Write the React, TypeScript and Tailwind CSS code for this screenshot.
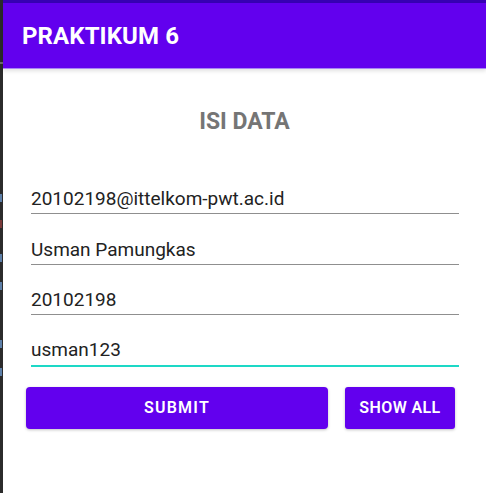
import React from "react";

const font = { fontFamily: "Roboto, 'Noto Sans', Arial, sans-serif" };

function Field({ value, last }: { value: string; last?: boolean }) {
  return (
    <div
      className={
        last
          ? "pb-[3px] border-b-2 border-[#1dd8c6]"
          : "pb-[2px] border-b border-[#8f8f8f]"
      }
    >
      <div className="h-[24px] leading-[24px] text-[19px] text-[#222222]">{value}</div>
    </div>
  );
}

export default function App() {
  return (
    <div className="flex w-[486px] h-[493px] overflow-hidden bg-white" style={font}>
      <div className="w-[3px] h-full bg-[#2b2b2b] flex flex-col">
        <div className="h-[62px]" />
        <div className="h-[2px] bg-[#6d6d6d]" />
        <div className="h-[130px]" />
        <div className="h-[8px] w-[2px] bg-[#5d7fa8]" />
        <div className="h-[18px]" />
        <div className="h-[8px] w-[2px] bg-[#7a3a3a]" />
        <div className="h-[26px]" />
        <div className="h-[8px] w-[2px] bg-[#5d7fa8]" />
        <div className="h-[20px]" />
        <div className="h-[8px] w-[2px] bg-[#5d7fa8]" />
        <div className="h-[50px]" />
        <div className="h-[8px] w-[2px] bg-[#5d7fa8]" />
        <div className="h-[20px]" />
        <div className="h-[8px] w-[2px] bg-[#5d7fa8]" />
      </div>
      <div className="flex-1 flex flex-col">
        <div className="h-[3px] bg-[#3700b3]" />
        <div className="relative z-10 h-[65px] bg-[#6200ee] flex items-center pl-[19px] shadow-[0_1px_0_#a884f5,0_3px_4px_rgba(0,0,0,0.12)]">
          <span className="text-white font-bold text-[24px] tracking-[0.1px]">PRAKTIKUM 6</span>
        </div>
        <div className="mt-[40px] h-[28px] leading-[28px] text-center text-[23px] font-bold text-[#757575]">
          ISI DATA
        </div>
        <div className="pl-[28px] pr-[27px] flex flex-col mt-[51px]">
          <Field value="20102198@ittelkom-pwt.ac.id" />
          <div className="mt-[24px]">
            <Field value="Usman Pamungkas" />
          </div>
          <div className="mt-[23px]">
            <Field value="20102198" />
          </div>
          <div className="mt-[23px]">
            <Field value="usman123" last />
          </div>
        </div>
        <div className="flex pl-[23px] pr-[31px] gap-[17px] mt-[20px]">
          <button className="flex-1 h-[42px] rounded-[4px] bg-[#6200ee] text-white text-[16px] font-semibold tracking-[1.2px] shadow-[0_1px_3px_rgba(0,0,0,0.25)]">
            SUBMIT
          </button>
          <button className="w-[110px] h-[42px] rounded-[3px] bg-[#6200ee] text-white text-[16px] font-semibold tracking-[0.4px] shadow-[0_1px_3px_rgba(0,0,0,0.25)]">
            SHOW ALL
          </button>
        </div>
      </div>
    </div>
  );
}
